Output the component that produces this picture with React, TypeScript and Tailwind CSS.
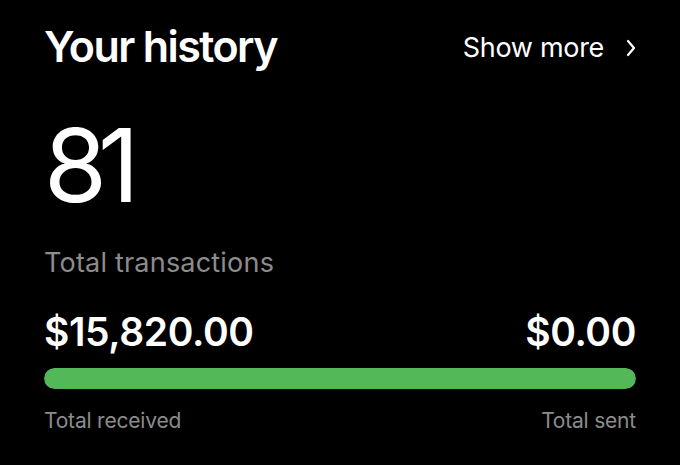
import React from 'react';

const ChevronRightIcon = (props: React.SVGProps<SVGSVGElement>) => (
    <svg {...props} xmlns="http://www.w3.org/2000/svg" viewBox="0 0 12 18" fill="none" stroke="currentColor" strokeWidth="2.2" strokeLinecap="round" strokeLinejoin="round"><path d="m3 2 6 7-6 7"/></svg>
);

const App: React.FC = () => {
    const received = 15820;
    const sent = 0;
    const total = received + sent;
    const pct = total > 0 ? (received / total) * 100 : 0;

    return (
        <div className="w-[680px] h-[465px] bg-black text-white px-[44px] pt-[25px] font-['Inter',sans-serif]">
            <div className="flex items-center justify-between">
                <h1 className="text-[43px] leading-none font-semibold tracking-[-1.6px]">Your history</h1>
                <button className="flex items-center gap-[21px] text-[27px] leading-none mt-[2px] tracking-[-0.3px]">
                    Show more
                    <ChevronRightIcon className="w-[12px] h-[18px] mr-[-1px]" />
                </button>
            </div>
            <div className="mt-[46px] text-[102px] leading-none font-normal tracking-[-9px]">81</div>
            <div className="mt-[33px] text-[27px] leading-none text-[#8c8c8c] tracking-[0.2px]">Total transactions</div>
            <div className="mt-[36px] flex justify-between text-[39px] leading-none font-semibold tracking-[-0.4px]">
                <span>$15,820.00</span>
                <span>$0.00</span>
            </div>
            <div className="mt-[17px] h-[21px] w-full rounded-full bg-[#2a2a2a] overflow-hidden">
                <div className="h-full rounded-full bg-[#53b857]" style={{ width: `${pct}%` }} />
            </div>
            <div className="mt-[21px] flex justify-between text-[21px] leading-none text-[#8c8c8c] tracking-[-0.2px]">
                <span>Total received</span>
                <span>Total sent</span>
            </div>
        </div>
    );
};

export default App;
